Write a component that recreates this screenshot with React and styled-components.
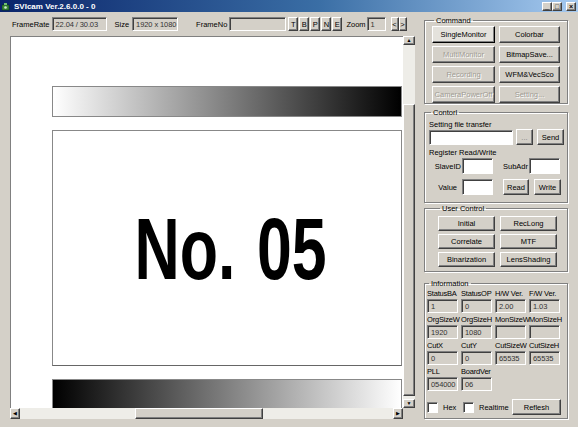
import styled, { createGlobalStyle, css } from "styled-components";

const Global = createGlobalStyle`
  body {
    margin: 0;
    background: #d4d0c8;
    font-family: "Liberation Sans", Arial, sans-serif;
    font-size: 7.5px;
    color: #000;
  }
`;

const raised = css`
  background: #d4d0c8;
  border: 1px solid;
  border-color: #fff #404040 #404040 #fff;
  box-shadow: inset -1px -1px 0 #808080;
`;

const sunken = css`
  border: 1px solid;
  border-color: #808080 #fff #fff #808080;
  box-shadow: inset 1px 1px 0 #404040;
`;

const Window = styled.div`
  width: 578px;
  height: 427px;
  overflow: hidden;
  background: #d4d0c8;
  display: flex;
  flex-direction: column;
`;

const TitleBar = styled.div`
  height: 12px;
  flex-shrink: 0;
  display: flex;
  align-items: center;
  padding: 0 2px;
  background: linear-gradient(90deg, #0a246a 0%, #3a6ea5 55%, #a6caf0 100%);
  color: #fff;
  font-weight: bold;
  font-size: 8px;
  gap: 3px;
`;

const TitleText = styled.span`
  flex: 1;
`;

const CapButton = styled.div`
  ${raised};
  width: 8px;
  height: 7px;
  display: flex;
  align-items: center;
  justify-content: center;
  font-size: 7px;
  line-height: 1;
  color: #000;
  font-weight: bold;
`;

const Body = styled.div`
  flex: 1;
  display: flex;
  gap: 4px;
`;

const LeftCol = styled.div`
  width: 416px;
  display: flex;
  flex-direction: column;
`;

const Toolbar = styled.div`
  height: 24px;
  display: flex;
  align-items: center;
  padding-left: 12px;
`;

const Label = styled.span`
  white-space: nowrap;
  margin-right: ${(p) => p.$mr || 0}px;
  margin-left: ${(p) => p.$ml || 0}px;
`;

const Field = styled.div`
  ${sunken};
  box-sizing: border-box;
  flex-shrink: 0;
  width: ${(p) => p.$w}px;
  height: ${(p) => p.$h || 15}px;
  background: ${(p) => (p.$white ? "#fff" : "#d4d0c8")};
  padding: 0 1px 0 3px;
  display: flex;
  align-items: center;
  white-space: nowrap;
  overflow: hidden;
  letter-spacing: -0.1px;
  color: #333;
`;

const TinyBtn = styled.div`
  ${raised};
  box-sizing: border-box;
  flex-shrink: 0;
  width: ${(p) => p.$w || 10}px;
  height: ${(p) => p.$h || 14}px;
  display: flex;
  align-items: center;
  justify-content: center;
  color: ${(p) => (p.$disabled ? "#808080" : "#000")};
`;

const BtnGroup = styled.div`
  display: flex;
  gap: ${(p) => p.$gap ?? 1}px;
  margin-left: ${(p) => p.$ml || 0}px;
`;

const Viewer = styled.div`
  margin-left: 10px;
  display: grid;
  grid-template-columns: 393px 12px;
  grid-template-rows: 372px 11px;
`;

const Canvas = styled.div`
  background: #fff;
  border-left: 1px solid #808080;
  border-top: 1px solid #808080;
  overflow: hidden;
  padding: 49px 0 0 41px;
  display: flex;
  flex-direction: column;
  gap: 13px;
`;

const GradBar = styled.div`
  width: 350px;
  height: ${(p) => p.$h}px;
  flex-shrink: 0;
  box-sizing: border-box;
  border: 1px solid #888;
  background: linear-gradient(
    90deg,
    ${(p) => (p.$dark ? "#000, #fff" : "#fff, #000")}
  );
`;

const Frame = styled.div`
  width: 350px;
  height: 236px;
  flex-shrink: 0;
  box-sizing: border-box;
  border: 1px solid #888;
  border-bottom-color: #666;
  display: flex;
  align-items: center;
  justify-content: center;
`;

const BigNo = styled.div`
  font-family: "Liberation Sans", Arial, sans-serif;
  font-weight: bold;
  font-size: 87px;
  line-height: 1;
  transform: scaleX(0.72);
  white-space: nowrap;
  margin-left: 8px;
  word-spacing: 6px;
`;

const VScroll = styled.div`
  display: flex;
  flex-direction: column;
  background: #eeede8;
`;

const HScroll = styled.div`
  display: flex;
  background: #eeede8;
`;

const Arrow = styled.div`
  ${raised};
  box-sizing: border-box;
  width: ${(p) => p.$w || 11}px;
  height: ${(p) => p.$h || 11}px;
  flex-shrink: 0;
  display: flex;
  align-items: center;
  justify-content: center;
  font-size: 5px;
  line-height: 1;
`;

const Thumb = styled.div`
  ${raised};
  box-sizing: border-box;
  flex-shrink: 0;
`;

const Spacer = styled.div`
  flex: ${(p) => (p.$size ? `0 0 ${p.$size}px` : 1)};
`;

const Corner = styled.div`
  background: #d4d0c8;
`;

const RightCol = styled.div`
  width: 144px;
  padding-left: 4px;
  display: flex;
  flex-direction: column;
  padding-top: 4px;
`;

const Group = styled.fieldset`
  margin: ${(p) => p.$mt || 0}px 0 0 0;
  border: 1px solid #808080;
  box-shadow: 1px 1px 0 #fff, inset 1px 1px 0 #fff;
  padding: ${(p) => p.$pad || "0 6px 4px 6px"};
  height: ${(p) => p.$h}px;
  box-sizing: border-box;
  min-width: 0;
  legend {
    padding: 0 2px;
    margin-left: 2px;
    line-height: 9px;
  }
`;

const BtnGrid = styled.div`
  display: grid;
  grid-template-columns: ${(p) => p.$cols};
  column-gap: ${(p) => p.$cg || 5}px;
  row-gap: ${(p) => p.$rg || 3}px;
  margin-top: ${(p) => p.$mt || 0}px;
`;

const Btn = styled.div`
  ${raised};
  box-sizing: border-box;
  height: ${(p) => p.$h || 16}px;
  display: flex;
  align-items: center;
  justify-content: center;
  white-space: nowrap;
  color: ${(p) => (p.$disabled ? "#a09c94" : "#000")};
  text-shadow: ${(p) => (p.$disabled ? "1px 1px 0 #fff" : "none")};
  ${(p) =>
    p.$active &&
    css`
      background: #e4e2dc;
      border-color: #fff #000 #000 #fff;
    `}
`;

const Caption = styled.div`
  margin-top: ${(p) => p.$mt || 0}px;
  line-height: 9px;
`;

const Row = styled.div`
  display: flex;
  align-items: center;
  gap: ${(p) => p.$gap || 0}px;
  margin-top: ${(p) => p.$mt || 0}px;
`;

const RegLabel = styled.span`
  width: ${(p) => p.$w}px;
  text-align: right;
  padding-right: ${(p) => p.$pr || 1}px;
  white-space: nowrap;
`;

const InfoGrid = styled.div`
  display: grid;
  grid-template-columns: repeat(4, 31px);
  column-gap: 3px;
  row-gap: 1px;
  margin-top: 1px;
`;

const InfoLabel = styled.div`
  height: 9px;
  line-height: 9px;
  white-space: nowrap;
  letter-spacing: -0.2px;
`;

const InfoCell = styled.div`
  display: flex;
  flex-direction: column;
  gap: 1px;
  margin-bottom: 1px;
`;

const Check = styled.label`
  display: flex;
  align-items: center;
  gap: 5px;
  width: ${(p) => p.$w}px;
  &::before {
    content: "";
    width: 9px;
    height: 9px;
    background: #fff;
    border: 1px solid;
    border-color: #808080 #fff #fff #808080;
    box-shadow: inset 1px 1px 0 #404040;
  }
`;

const info = [
  ["StatusBA", "1"],
  ["StatusOP", "0"],
  ["H/W Ver.", "2.00"],
  ["F/W Ver.", "1.03"],
  ["OrgSizeW", "1920"],
  ["OrgSizeH", "1080"],
  ["MonSizeW", ""],
  ["MonSizeH", ""],
  ["CutX", "0"],
  ["CutY", "0"],
  ["CutSizeW", "65535"],
  ["CutSizeH", "65535"],
  ["PLL", "054000"],
  ["BoardVer", "06"],
];

function AppIcon() {
  return (
    <svg width="9" height="9" viewBox="0 0 9 9">
      <rect x="0" y="3" width="7" height="5" fill="#3a8a3a" stroke="#0b3d0b" strokeWidth="0.6" />
      <rect x="2" y="1" width="3" height="2" fill="#6fc16f" />
      <circle cx="3.5" cy="5.5" r="1.3" fill="#cfe9cf" />
    </svg>
  );
}

export default function App() {
  return (
    <Window>
      <Global />
      <TitleBar>
        <AppIcon />
        <TitleText>SVIcam Ver.2.6.0.0 - 0</TitleText>
        <BtnGroup $gap={0}>
          <CapButton>_</CapButton>
          <CapButton>□</CapButton>
        </BtnGroup>
        <CapButton style={{ marginLeft: 1 }}>×</CapButton>
      </TitleBar>
      <Body>
        <LeftCol>
          <Toolbar>
            <Label $mr={2}>FrameRate</Label>
            <Field $w={55} $h={14}>22.04 / 30.03</Field>
            <Label $ml={8} $mr={3}>Size</Label>
            <Field $w={46} $h={14}>1920 x 1080</Field>
            <Label $ml={18} $mr={2}>FrameNo</Label>
            <Field $w={57} $h={14} />
            <BtnGroup $ml={2}>
              <TinyBtn>T</TinyBtn>
              <TinyBtn>B</TinyBtn>
              <TinyBtn>P</TinyBtn>
              <TinyBtn>N</TinyBtn>
              <TinyBtn>E</TinyBtn>
            </BtnGroup>
            <Label $ml={4} $mr={1}>Zoom</Label>
            <Field $w={19} $h={14}>1</Field>
            <BtnGroup $ml={5} $gap={0}>
              <TinyBtn $w={8}>&lt;</TinyBtn>
              <TinyBtn $w={8}>&gt;</TinyBtn>
            </BtnGroup>
          </Toolbar>
          <Viewer>
            <Canvas>
              <GradBar $h={31} />
              <Frame>
                <BigNo>No. 05</BigNo>
              </Frame>
              <GradBar $h={30} $dark />
            </Canvas>
            <VScroll>
              <Arrow $w={12} $h={9}>▲</Arrow>
              <Spacer $size={59} />
              <Thumb style={{ height: 292 }} />
              <Spacer />
              <Arrow $w={12} $h={9}>▼</Arrow>
            </VScroll>
            <HScroll>
              <Arrow $w={10}>◀</Arrow>
              <Spacer $size={115} />
              <Thumb style={{ width: 128 }} />
              <Spacer />
              <Arrow $w={10}>▶</Arrow>
            </HScroll>
            <Corner />
          </Viewer>
        </LeftCol>

        <RightCol>
          <Group $h={88} $pad="0 6px 4px 7px">
            <legend>Command</legend>
            <BtnGrid $cols="63px 61px" $cg={4} $rg={3} $mt={1}>
              <Btn $h={17} $active>SingleMonitor</Btn>
              <Btn $h={17}>Colorbar</Btn>
              <Btn $h={17} $disabled>MultiMonitor</Btn>
              <Btn $h={17}>BitmapSave...</Btn>
              <Btn $h={17} $disabled>Recording</Btn>
              <Btn $h={17}>WFM&amp;VecSco</Btn>
              <Btn $h={17} $disabled>CameraPowerOff</Btn>
              <Btn $h={17} $disabled>Setting...</Btn>
            </BtnGrid>
          </Group>

          <Group $h={95} $mt={4} $pad="0 6px 4px 4px">
            <legend>Contorl</legend>
            <Caption $mt={3}>Setting file transfer</Caption>
            <Row $gap={3} $mt={0}>
              <Field $w={84} $h={15} $white />
              <TinyBtn $w={17} $h={16} $disabled>...</TinyBtn>
              <TinyBtn $w={27} $h={16} style={{ marginLeft: 1 }}>Send</TinyBtn>
            </Row>
            <Caption $mt={3}>Register Read/Write</Caption>
            <Row $mt={1}>
              <RegLabel $w={32}>SlaveID</RegLabel>
              <Field $w={31} $h={16} $white />
              <RegLabel $w={35}>SubAdr</RegLabel>
              <Field $w={31} $h={16} $white />
            </Row>
            <Row $mt={5}>
              <RegLabel $w={32} $pr={5}>Value</RegLabel>
              <Field $w={31} $h={16} $white />
              <TinyBtn $w={26} $h={16} style={{ marginLeft: 10 }}>Read</TinyBtn>
              <TinyBtn $w={27} $h={16} style={{ marginLeft: 5 }}>Write</TinyBtn>
            </Row>
          </Group>

          <Group $h={68} $mt={1} $pad="0 6px 4px 13px">
            <legend>User Control</legend>
            <BtnGrid $cols="57px 57px" $cg={5} $rg={3} $mt={3}>
              <Btn $h={15}>Initial</Btn>
              <Btn $h={15}>RecLong</Btn>
              <Btn $h={15}>Correlate</Btn>
              <Btn $h={15}>MTF</Btn>
              <Btn $h={15}>Binarization</Btn>
              <Btn $h={15}>LensShading</Btn>
            </BtnGrid>
          </Group>

          <Group $h={140} $mt={7} $pad="0 4px 4px 2px">
            <legend>Information</legend>
            <InfoGrid>
              {info.map(([label, value]) => (
                <InfoCell key={label}>
                  <InfoLabel>{label}</InfoLabel>
                  <Field $w={31} $h={14}>{value}</Field>
                </InfoCell>
              ))}
            </InfoGrid>
            <Row $mt={7}>
              <Check $w={36}>Hex</Check>
              <Check $w={49}>Realtime</Check>
              <Btn $h={16} style={{ width: 49 }}>Reflesh</Btn>
            </Row>
          </Group>
        </RightCol>
      </Body>
    </Window>
  );
}
